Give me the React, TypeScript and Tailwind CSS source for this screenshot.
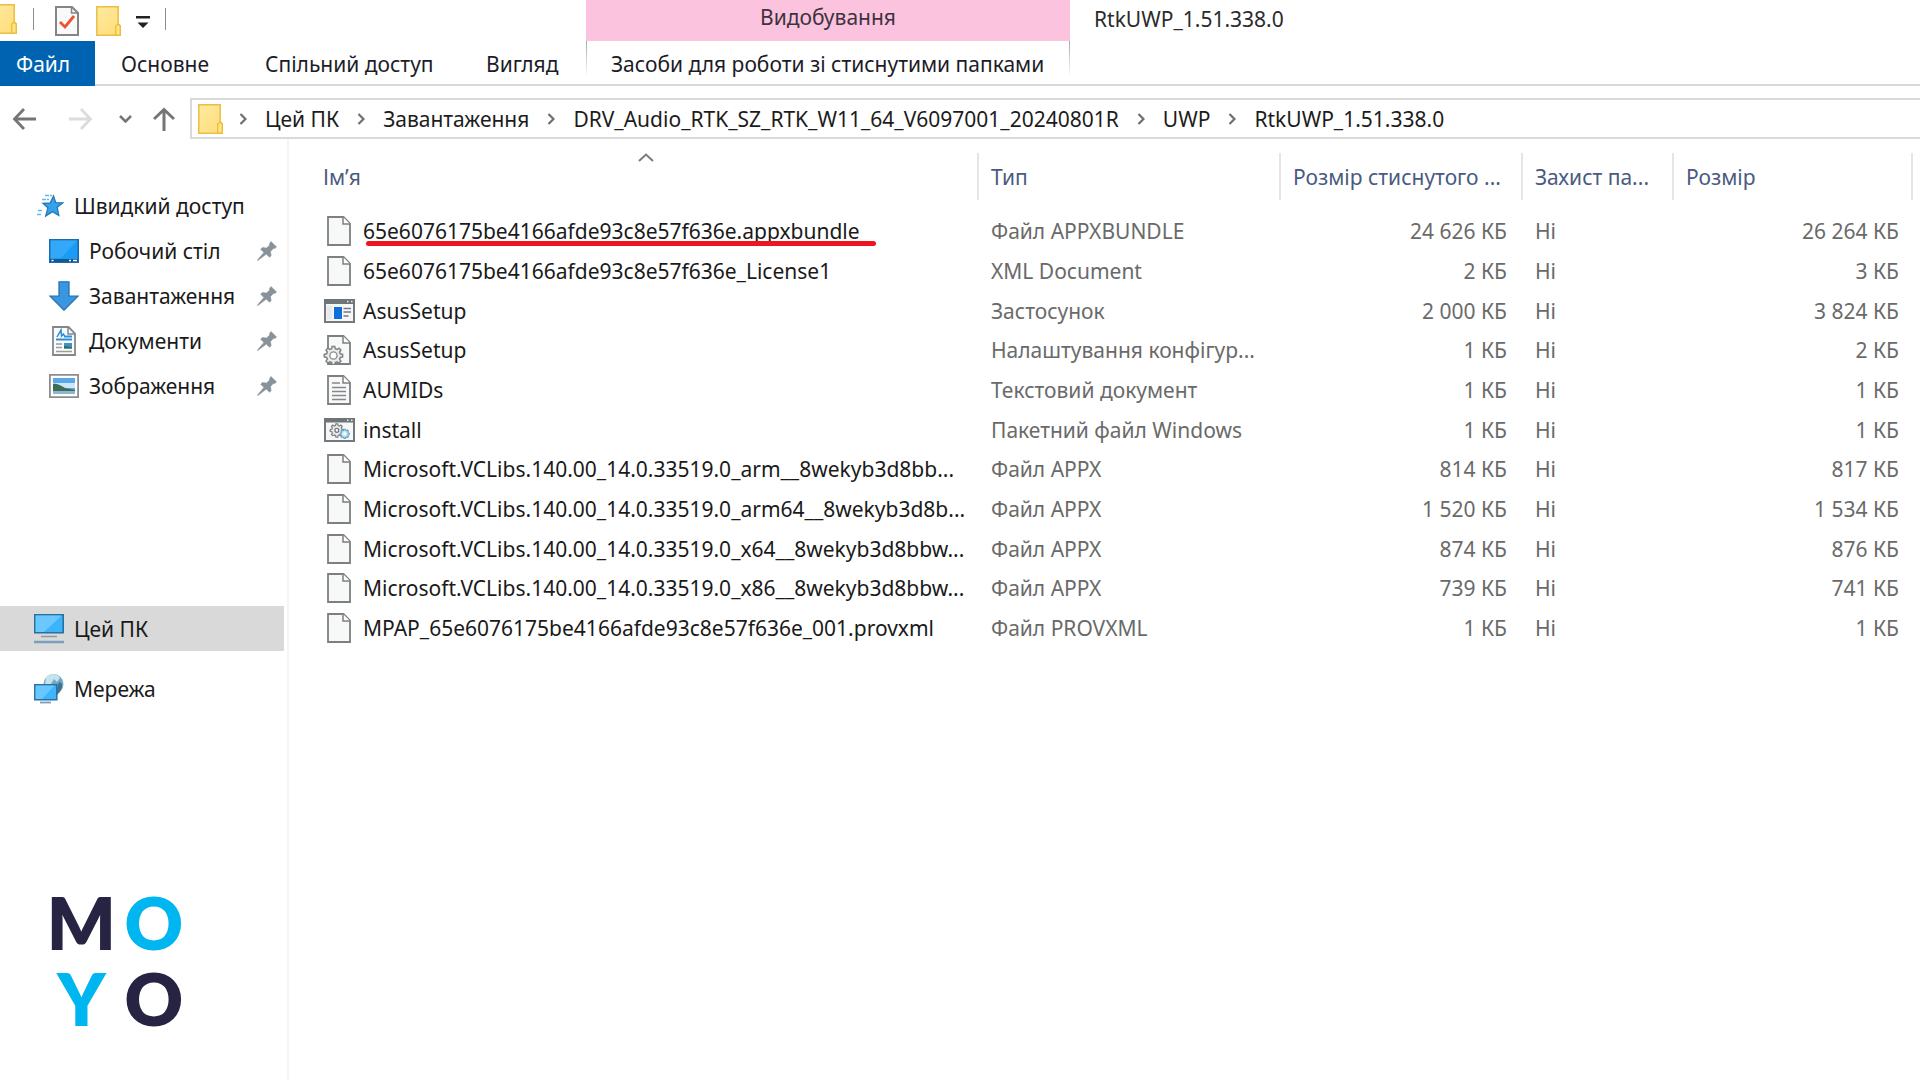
import React from "react";
import type { ReactNode } from "react";

/* ---------- icons ---------- */

function FolderIcon({ className = "" }: { className?: string }) {
  return (
    <svg viewBox="0 0 25 30" className={`h-[30px] w-[25px] shrink-0 ${className}`} aria-hidden="true">
      <defs>
        <linearGradient id="folder" x1="0" y1="0" x2="1" y2="1">
          <stop offset="0" stopColor="#ffeaa0" />
          <stop offset="1" stopColor="#ffdc78" />
        </linearGradient>
      </defs>
      <path d="M.8.8h21.4v17.4l2 1.6v9.4H.8z" fill="url(#folder)" stroke="#e9bf45" strokeWidth="1.5" />
      <path d="M22.2 18.2 19.8 20v9.2h4.4v-9.4z" fill="#ffe48d" stroke="#e9bf2f" strokeWidth="1.3" />
    </svg>
  );
}

function CheckDocIcon() {
  return (
    <svg viewBox="0 0 24 30" className="h-[30px] w-6" fill="none" aria-hidden="true">
      <path d="M1 1h16l6 6v22H1z" fill="#f8f9fa" stroke="#858585" strokeWidth="2" />
      <path d="M16.5 1v6H23" stroke="#858585" strokeWidth="1.5" />
      <path d="m5 16 5 5 9-11" stroke="#f0522d" strokeWidth="2.8" />
    </svg>
  );
}

function PageShape() {
  return (
    <>
      <path d="M5 1h15.500l6.500 6.500V29H5z" fill="#f7f8f8" stroke="#7d7f81" strokeWidth="1.8" />
      <path d="M20 1v7h7" fill="#fff" stroke="#7d7f81" strokeWidth="1.500" />
    </>
  );
}

const gearPath =
  "M9 .5h3l.5 2.600 2 .8 2.200-1.500 2.100 2.100-1.500 2.200.8 2 2.600.5v3l-2.600.5-.8 2 1.500 2.200-2.100 2.100-2.200-1.500-2 .8-.5 2.600H9l-.5-2.600-2-.8-2.200 1.500-2.100-2.100 1.500-2.200-.8-2-2.600-.5v-3l2.600-.5.8-2-1.500-2.200 2.100-2.100 2.200 1.500 2-.8z";

function PageIcon() {
  return (
    <svg viewBox="0 0 32 30" className="h-[30px] w-8" fill="none" aria-hidden="true">
      <PageShape />
    </svg>
  );
}

function TextIcon() {
  return (
    <svg viewBox="0 0 32 30" className="h-[30px] w-8" fill="none" aria-hidden="true">
      <PageShape />
      <path d="M9 8h8M9 12.500h14M9 16.500h14M9 20.500h14M9 24.500h14" stroke="#85878a" strokeWidth="1.500" />
    </svg>
  );
}

function ConfigIcon() {
  return (
    <svg viewBox="0 0 32 30" className="h-[30px] w-8" fill="none" aria-hidden="true">
      <PageShape />
      <g transform="translate(1 11) scale(.9)">
        <path d={gearPath} fill="#e9ebec" stroke="#7d7f81" strokeWidth="1.600" />
        <circle cx="10.500" cy="10.500" r="4" fill="#fff" stroke="#8b8d8f" strokeWidth="1.500" />
      </g>
    </svg>
  );
}

function AppIcon() {
  return (
    <svg viewBox="0 0 32 24" className="h-6 w-8" fill="none" aria-hidden="true">
      <path d="M2 1h29v22H2z" fill="#f6f7f8" stroke="#74797d" strokeWidth="2" />
      <path d="M1 0h31v5H1z" fill="#6f7478" />
      <path d="M24 2.500h1.500M28 2.500h1.500" stroke="#e8eaeb" strokeWidth="1.500" />
      <path d="M3.500 6.500h6v14h-6z" fill="#e9eaec" />
      <path d="M11 8h8v12h-8z" fill="#0f6fdb" />
      <path d="M20.500 9.500H28M20.500 13H28M20.500 17h5" stroke="#74797d" strokeWidth="1.500" />
    </svg>
  );
}

function BatchIcon() {
  return (
    <svg viewBox="0 0 32 24" className="h-6 w-8" fill="none" aria-hidden="true">
      <path d="M2 1h29v22H2z" fill="#f6f7f8" stroke="#74797d" strokeWidth="2" />
      <path d="M1 0h31v4.500H1z" fill="#6f7478" />
      <path d="M24 2.200h1.500M28 2.200h1.500" stroke="#e8eaeb" strokeWidth="1.500" />
      <g transform="translate(7 5.500) scale(.65)">
        <path d={gearPath} fill="#e9ebec" stroke="#7d7f81" strokeWidth="1.800" />
        <circle cx="10.500" cy="10.500" r="3" fill="#fff" stroke="#74797d" strokeWidth="2" />
      </g>
      <g transform="translate(17 11) scale(.45)">
        <path d={gearPath} fill="#cfe9f8" stroke="#6ba7c9" strokeWidth="2.500" />
        <circle cx="10.500" cy="10.500" r="3" fill="#fff" />
      </g>
    </svg>
  );
}

function StarIcon() {
  return (
    <svg viewBox="0 0 27 24" className="h-6 w-[27px]" fill="none" aria-hidden="true">
      <path
        d="m16.500 2 2.200 6.600 7.300.2-5.800 4.500 1.600 8.200-6.300-3.900-6.800 4.400 2.200-8.200L6 9.300l7.200-.3z"
        fill="#35a3ec"
        stroke="#2477b8"
        strokeWidth="1.300"
      />
      <path d="M8 1.500h7M5 5.500h7M1 16.500h5M0 20.500h5" stroke="#5db9ef" strokeWidth="1.500" strokeDasharray="4 1" />
    </svg>
  );
}

function DesktopIcon() {
  return (
    <svg viewBox="0 0 30 24" className="h-6 w-[30px]" aria-hidden="true">
      <path d="M.8.8h28.400v22.400H.8z" fill="#1b9bf4" stroke="#1a6cae" strokeWidth="1.600" />
      <path d="M1.600 1.600h26.800L12 19H1.600z" fill="#33a8f8" />
      <path d="M1 20h28v3H1z" fill="#11598f" />
      <path d="M2.500 21.500h2M20 21.500h2M24 21.500h4" stroke="#fff" strokeWidth="1.400" />
    </svg>
  );
}

function DownloadIcon() {
  return (
    <svg viewBox="0 0 30 30" className="h-[30px] w-[30px]" aria-hidden="true">
      <path d="M10 .8h10v14.400h9L15 29.200 1 15.200h9z" fill="#3b96e0" stroke="#2673b5" strokeWidth="1.300" />
    </svg>
  );
}

function DocumentIcon() {
  return (
    <svg viewBox="0 0 24 30" className="h-[30px] w-[30px]" fill="none" aria-hidden="true">
      <path d="M1 1h15.500L23 7.500V29H1z" fill="#fafbfb" stroke="#84878a" strokeWidth="1.800" />
      <path d="M16 1v7h7" stroke="#84878a" strokeWidth="1.500" />
      <path d="m5 11 4-7 .5 6 2-2 1 2" stroke="#2a8ad4" strokeWidth="1.500" />
      <path d="M4 13.500h16M12 10.500h8" stroke="#2b8fdc" strokeWidth="2" />
      <path d="M4 18h6M4 21.500h6M4 25.500h16" stroke="#9a9c9e" strokeWidth="1.400" />
      <path d="M12 17h8v5.500h-8z" fill="#3d8fd0" />
      <path d="M12 22.500V20l4 .500 4 1v1z" fill="#2f6f47" />
    </svg>
  );
}

function PictureIcon() {
  return (
    <svg viewBox="0 0 30 24" className="h-6 w-[30px]" aria-hidden="true">
      <path d="M.9.900h28.200v22.200H.9z" fill="#fff" stroke="#8b8d8f" strokeWidth="1.800" />
      <path d="M4 4h22v16H4z" fill="#5aa7ec" />
      <path d="M4 9h22v5H4z" fill="#cfe6f8" />
      <path d="M4 10c5-1 8 2 12 4l10 2v1H4z" fill="#3c6e55" />
      <path d="M4 17h22v3H4z" fill="#8fb6ce" />
    </svg>
  );
}

function ComputerIcon() {
  return (
    <svg viewBox="0 0 30 30" className="h-[30px] w-[30px]" aria-hidden="true">
      <path d="M.8.8h28.400v18H.8z" fill="#3cb4fb" stroke="#2b6f9c" strokeWidth="1.600" />
      <path d="M1.600 1.600h26L10 18H1.600z" fill="#6ac8ff" />
      <path d="M7 22.500h16" stroke="#8a99a8" strokeWidth="1.500" />
      <path d="M0 28h30" stroke="#7e9cbc" strokeWidth="2.500" />
    </svg>
  );
}

function NetworkIcon() {
  return (
    <svg viewBox="0 0 30 31" className="h-[31px] w-[30px]" aria-hidden="true">
      <circle cx="19.500" cy="11" r="10" fill="#6fa9c4" />
      <path d="M12 4c4-5 12-3 14 1l-3 4-3-3-3 5-6 1z" fill="#c6e2ec" />
      <path d="M25 9c5 0 4 10-4 14z" fill="#3e7290" />
      <path d="M.8 11.800h22v15H.8z" fill="#3db5fb" stroke="#2b6f9c" strokeWidth="1.500" />
      <path d="M1.600 12.600h19L8 26H1.600z" fill="#69c7ff" />
      <path d="M6 29.500h11" stroke="#7e9cbc" strokeWidth="1.800" />
    </svg>
  );
}

function PinIcon() {
  return (
    <svg viewBox="0 0 20 20" className="h-5 w-5" aria-hidden="true">
      <path
        d="M14 .5 19.500 6l-1.800 1.500-1.200-.2-3 3.200.6 4.200-1.600 1.600-3.200-3.200L1.500 19 .5 19.500 1 18.500l5.900-7.100L3.700 8.200l1.600-1.600 4.200.5 3.200-3-.2-1.400z"
        fill="#87929a"
        stroke="#87929a"
        strokeWidth=".6"
      />
    </svg>
  );
}

function CrumbArrow() {
  return (
    <svg viewBox="0 0 8 12" className="mx-[18px] h-3 w-2 shrink-0" fill="none" aria-hidden="true">
      <path d="m1.500 1 5 5-5 5" stroke="#6f6f6f" strokeWidth="2.200" />
    </svg>
  );
}

/* ---------- data ---------- */

type FileRow = { icon: ReactNode; name: string; type: string; packed: string; size: string; marked?: boolean };

const files: FileRow[] = [
  { icon: <PageIcon />, name: "65e6076175be4166afde93c8e57f636e.appxbundle", type: "Файл APPXBUNDLE", packed: "24 626 КБ", size: "26 264 КБ", marked: true },
  { icon: <PageIcon />, name: "65e6076175be4166afde93c8e57f636e_License1", type: "XML Document", packed: "2 КБ", size: "3 КБ" },
  { icon: <AppIcon />, name: "AsusSetup", type: "Застосунок", packed: "2 000 КБ", size: "3 824 КБ" },
  { icon: <ConfigIcon />, name: "AsusSetup", type: "Налаштування конфігур...", packed: "1 КБ", size: "2 КБ" },
  { icon: <TextIcon />, name: "AUMIDs", type: "Текстовий документ", packed: "1 КБ", size: "1 КБ" },
  { icon: <BatchIcon />, name: "install", type: "Пакетний файл Windows", packed: "1 КБ", size: "1 КБ" },
  { icon: <PageIcon />, name: "Microsoft.VCLibs.140.00_14.0.33519.0_arm__8wekyb3d8bb...", type: "Файл APPX", packed: "814 КБ", size: "817 КБ" },
  { icon: <PageIcon />, name: "Microsoft.VCLibs.140.00_14.0.33519.0_arm64__8wekyb3d8b...", type: "Файл APPX", packed: "1 520 КБ", size: "1 534 КБ" },
  { icon: <PageIcon />, name: "Microsoft.VCLibs.140.00_14.0.33519.0_x64__8wekyb3d8bbw...", type: "Файл APPX", packed: "874 КБ", size: "876 КБ" },
  { icon: <PageIcon />, name: "Microsoft.VCLibs.140.00_14.0.33519.0_x86__8wekyb3d8bbw...", type: "Файл APPX", packed: "739 КБ", size: "741 КБ" },
  { icon: <PageIcon />, name: "MPAP_65e6076175be4166afde93c8e57f636e_001.provxml", type: "Файл PROVXML", packed: "1 КБ", size: "1 КБ" },
];

const pinned = [
  { icon: <DesktopIcon />, label: "Робочий стіл" },
  { icon: <DownloadIcon />, label: "Завантаження" },
  { icon: <DocumentIcon />, label: "Документи" },
  { icon: <PictureIcon />, label: "Зображення" },
];

const crumbs = ["Цей ПК", "Завантаження", "DRV_Audio_RTK_SZ_RTK_W11_64_V6097001_20240801R", "UWP", "RtkUWP_1.51.338.0"];

/* ---------- sections ---------- */

function TitleBar() {
  return (
    <div className="flex h-[41px]">
      <div className="flex w-[586px] shrink-0 items-start overflow-hidden">
        <FolderIcon className="-ml-2 mt-1" />
        <span className="ml-4 mt-2 h-[22px] w-px bg-[#8c8c8c]" />
        <button aria-label="Властивості" className="ml-[21px] mt-1.5">
          <CheckDocIcon />
        </button>
        <button aria-label="Нова папка" className="ml-[17px] mt-1.5">
          <FolderIcon />
        </button>
        <button aria-label="Настроїти панель" className="ml-[15px] mt-4">
          <svg viewBox="0 0 14 12" className="h-3 w-3.5" aria-hidden="true">
            <path d="M0 0h14v2.500H0zM1.500 6.500h11L7 12z" fill="#222" />
          </svg>
        </button>
        <span className="ml-[15px] mt-2 h-[22px] w-px bg-[#8c8c8c]" />
      </div>
      <div className="flex w-[484px] shrink-0 items-start justify-center bg-[#fcc3de] pt-0.5 text-[#3c3340]">Видобування</div>
      <h1 className="pl-6 pt-1 text-[#2b2b2b]">RtkUWP_1.51.338.0</h1>
    </div>
  );
}

function RibbonTabs() {
  return (
    <nav className="flex h-[45px] border-b-2 border-[#d8d8d8] text-[#1c1c28]">
      <button className="-mb-0.5 flex w-[95px] shrink-0 items-center bg-[#0063b1] pl-4 text-white">Файл</button>
      <div className="flex w-[491px] shrink-0 items-center whitespace-nowrap pl-[26px] pt-0.5">
        <button className="w-36 text-left">Основне</button>
        <button className="w-[221px] text-left">Спільний доступ</button>
        <button className="text-left">Вигляд</button>
      </div>
      <span className="h-9 w-px bg-linear-to-b from-[#a8a8a8] to-white" />
      <button className="w-[482px] shrink-0 whitespace-nowrap pl-6 pt-0.5 text-left">Засоби для роботи зі стиснутими папками</button>
      <span className="h-9 w-px bg-linear-to-b from-[#a8a8a8] to-white" />
    </nav>
  );
}

function AddressBar() {
  return (
    <div className="flex h-[41px] items-stretch">
      <div className="flex w-[190px] shrink-0 items-center pl-3">
        <button aria-label="Назад">
          <svg viewBox="0 0 24 22" className="h-[22px] w-6" fill="none" stroke="#757575" strokeWidth="2.800" aria-hidden="true">
            <path d="M24 11H3M12 1 2.500 11l9.500 10" />
          </svg>
        </button>
        <button aria-label="Вперед" className="ml-[33px]">
          <svg viewBox="0 0 24 22" className="h-[22px] w-6" fill="none" stroke="#dcdcdc" strokeWidth="2.800" aria-hidden="true">
            <path d="M0 11h21M12 1l9.500 10L12 21" />
          </svg>
        </button>
        <button aria-label="Останні розташування" className="ml-[26px]">
          <svg viewBox="0 0 13 8" className="h-2 w-[13px]" fill="none" stroke="#757575" strokeWidth="2.500" aria-hidden="true">
            <path d="m1 1 5.500 5.500L12 1" />
          </svg>
        </button>
        <button aria-label="Вгору" className="ml-[21px]">
          <svg viewBox="0 0 22 24" className="h-6 w-[22px]" fill="none" stroke="#757575" strokeWidth="3" aria-hidden="true">
            <path d="M11 24V3M1 12 11 2.500 21 12" />
          </svg>
        </button>
      </div>
      <div className="flex min-w-0 flex-1 items-center overflow-hidden whitespace-nowrap border-2 border-r-0 border-[#d9d9d9] pl-1.5 text-[#1c1c1c]">
        <FolderIcon className="-mr-0.5" />
        {crumbs.map((crumb) => (
          <React.Fragment key={crumb}>
            <CrumbArrow />
            <button>{crumb}</button>
          </React.Fragment>
        ))}
      </div>
    </div>
  );
}

function Sidebar() {
  return (
    <aside className="w-[289px] shrink-0 border-r-2 border-[#f5f5f5] pt-11 text-[#1a1a1a]">
      <a href="#quick" className="flex h-[45px] items-center pl-[37px]">
        <StarIcon />
        <span className="pl-2.5">Швидкий доступ</span>
      </a>
      {pinned.map((item) => (
        <a key={item.label} href="#pinned" className="flex h-[45px] items-center pl-[49px] pr-2.5">
          {item.icon}
          <span className="flex-1 pl-2.5">{item.label}</span>
          <PinIcon />
        </a>
      ))}
      <a href="#pc" className="mr-[3px] mt-[198px] flex h-[45px] items-center bg-[#d9d9d9] pl-[34px]">
        <ComputerIcon />
        <span className="pl-2.5">Цей ПК</span>
      </a>
      <a href="#network" className="mt-[15px] flex h-[45px] items-center pl-[34px]">
        <NetworkIcon />
        <span className="pl-2.5">Мережа</span>
      </a>
      <div className="ml-[45px] mt-[173px] grid w-[145px] grid-cols-2 justify-items-center font-['Lato'] text-[72px] font-extrabold leading-[76px] text-[#272343]">
        <span>M</span>
        <span className="text-[#00b6f0]">O</span>
        <span className="text-[#00b6f0]">Y</span>
        <span>O</span>
      </div>
    </aside>
  );
}

function HeaderCell({ children }: { children: ReactNode }) {
  return (
    <th className="p-0 font-normal">
      <div className="flex h-[47px] items-center border-l-2 border-[#e5e5e5] pl-3">{children}</div>
    </th>
  );
}

function FileTable() {
  return (
    <main className="min-w-0 flex-1 pr-[5px] pt-3.5">
      <table className="w-full table-fixed border-r-2 border-transparent text-left whitespace-nowrap">
        <colgroup>
          <col />
          <col className="w-[302px]" />
          <col className="w-[242px]" />
          <col className="w-[151px]" />
          <col className="w-[242px]" />
        </colgroup>
        <thead className="text-[#4a5a80]">
          <tr className="h-[58px] align-top">
            <th className="relative p-0 font-normal">
              <div className="flex h-[47px] items-center pl-[34px]">Ім’я</div>
              <svg viewBox="0 0 16 9" className="absolute left-[349px] top-0 h-[9px] w-4" fill="none" aria-hidden="true">
                <path d="m1 8 7-6.500L15 8" stroke="#7b7b7b" strokeWidth="2" />
              </svg>
            </th>
            <HeaderCell>Тип</HeaderCell>
            <HeaderCell>Розмір стиснутого ...</HeaderCell>
            <HeaderCell>Захист па...</HeaderCell>
            <th className="p-0 font-normal">
              <div className="flex h-[47px] items-center border-x-2 border-[#e5e5e5] pl-3">Розмір</div>
            </th>
          </tr>
        </thead>
        <tbody className="text-[#6a6a6a]">
          {files.map((file) => (
            <tr key={file.name + file.type} className="h-10 nth-[3n]:h-[39px]">
              <td className="relative p-0">
                <div className="flex items-center gap-2 pl-[34px] text-[#1a1a1a]">
                  {file.icon}
                  <span>{file.name}</span>
                </div>
                {file.marked && <span className="absolute left-[77px] top-[30px] h-[5px] w-[510px] rounded-full bg-[#f0141e]" />}
              </td>
              <td className="p-0 pl-3.5">{file.type}</td>
              <td className="p-0 pr-3.5 text-right">{file.packed}</td>
              <td className="p-0 pl-3.5">Ні</td>
              <td className="p-0 pr-3.5 text-right">{file.size}</td>
            </tr>
          ))}
        </tbody>
      </table>
    </main>
  );
}

export default function App() {
  return (
    <div className="flex min-h-screen flex-col bg-white font-['Noto_Sans','Open_Sans',sans-serif] text-[21px] leading-[30px]">
      <header>
        <TitleBar />
        <RibbonTabs />
        <div className="pt-3">
          <AddressBar />
        </div>
      </header>
      <div className="flex flex-1">
        <Sidebar />
        <FileTable />
      </div>
    </div>
  );
}
